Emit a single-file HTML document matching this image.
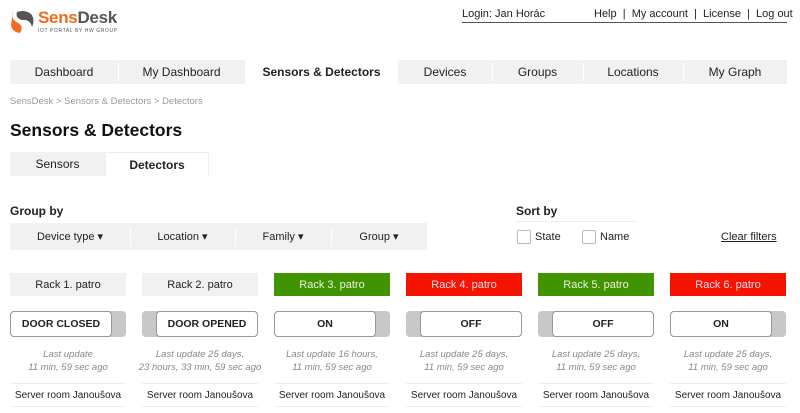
<!DOCTYPE html>
<html><head><meta charset="utf-8"><style>
*{margin:0;padding:0;box-sizing:border-box}
body{width:800px;height:413px;background:#fff;font-family:"Liberation Sans",sans-serif;color:#222;position:relative;overflow:hidden;font-size:12px}
.a{position:absolute}
.c{display:flex;align-items:center;justify-content:center}
.nav div{position:absolute;top:60px;height:24px;background:#f1f1f1;display:flex;align-items:center;justify-content:center;font-size:12px}
.sep{position:absolute;width:1px;background:#fff}
.rack{position:absolute;top:273px;width:116px;height:23px;display:flex;align-items:center;justify-content:center;font-size:11px;background:#f1f1f1}
.g{background:#419400;color:#e8f4dd}.r{background:#f61300;color:#fde}
.tg{position:absolute;top:311px;width:116px;height:26px;background:#c8c8c8;border-radius:4px}
.tg span{position:absolute;top:0;height:26px;width:102px;background:#fff;border:1px solid #999;border-radius:4px;display:flex;align-items:center;justify-content:center;font-weight:bold;font-size:10.5px}
.lu{position:absolute;top:348px;width:140px;text-align:center;font-style:italic;color:#888;font-size:9.5px;line-height:13px;white-space:nowrap}
.sr{position:absolute;top:383px;width:116px;height:24px;border-top:1px solid #eee;border-bottom:1px solid #eee;display:flex;align-items:center;justify-content:center;font-size:10px;white-space:nowrap}
.cb{position:absolute;top:230px;width:14px;height:14px;border:1px solid #bbb;border-radius:2px}
</style></head><body>
<svg class="a" style="left:10px;top:9px" width="26" height="26" viewBox="0 0 26 26"><path d="M3 2 Q0 10 8 14 Q14 17 10 24 Q2 23 1 16Z" fill="#f26a1b"/><path d="M7 3 Q16 0 22 6 Q25 12 22 18 Q20 10 12 11 Q5 9 7 3Z" fill="#555"/></svg>
<div class="a" style="left:38px;top:8px;font-size:17px;font-weight:bold;letter-spacing:-0.3px"><span style="color:#f26a1b">Sens</span><span style="color:#555">Desk</span></div>
<div class="a" style="left:38px;top:28px;font-size:5px;color:#555;letter-spacing:0.6px">IOT PORTAL BY HW GROUP</div>
<div class="a" style="left:462px;top:8px;font-size:11px">Login: Jan Horác</div>
<div class="a" style="left:594px;top:8px;font-size:11px">Help &nbsp;|&nbsp; My account &nbsp;|&nbsp; License &nbsp;|&nbsp; Log out</div>
<div class="a" style="left:462px;top:22px;width:325px;height:1px;background:#555"></div>
<div class="nav">
<div style="left:10px;width:108px">Dashboard</div>
<div style="left:118px;width:127px">My Dashboard</div>
<div style="left:245px;width:153px;background:#fff;font-weight:bold">Sensors &amp; Detectors</div>
<div style="left:398px;width:94px">Devices</div>
<div style="left:492px;width:91px">Groups</div>
<div style="left:583px;width:100px">Locations</div>
<div style="left:683px;width:104px">My Graph</div>
</div>
<div class="sep" style="left:118px;top:63px;height:18px"></div>
<div class="sep" style="left:492px;top:63px;height:18px"></div>
<div class="sep" style="left:583px;top:63px;height:18px"></div>
<div class="sep" style="left:683px;top:63px;height:18px"></div>
<div class="a" style="left:10px;top:96px;font-size:9.5px;color:#999">SensDesk &gt; Sensors &amp; Detectors &gt; Detectors</div>
<div class="a" style="left:10px;top:120px;font-size:17.5px;font-weight:bold;color:#111">Sensors &amp; Detectors</div>
<div class="a c" style="left:10px;top:152px;width:95px;height:24px;background:#f1f1f1">Sensors</div>
<div class="a c" style="left:105px;top:152px;width:104px;height:24px;border:1px solid #eee;border-bottom:none;font-weight:bold">Detectors</div>
<div class="a" style="left:10px;top:204px;font-weight:bold;font-size:12px">Group by</div>
<div class="a" style="left:10px;top:223px;width:417px;height:27px;background:#f1f1f1"></div>
<div class="a c" style="left:10px;top:223px;width:120px;height:27px;font-size:11px">Device type ▾</div>
<div class="a c" style="left:130px;top:223px;width:105px;height:27px;font-size:11px">Location ▾</div>
<div class="a c" style="left:235px;top:223px;width:96px;height:27px;font-size:11px">Family ▾</div>
<div class="a c" style="left:331px;top:223px;width:96px;height:27px;font-size:11px">Group ▾</div>
<div class="sep" style="left:130px;top:228px;height:18px"></div>
<div class="sep" style="left:235px;top:228px;height:18px"></div>
<div class="sep" style="left:331px;top:228px;height:18px"></div>
<div class="a" style="left:516px;top:204px;font-weight:bold;font-size:12px">Sort by</div>
<div class="a" style="left:516px;top:221px;width:122px;height:1px;background:#eee"></div>
<div class="cb" style="left:517px"></div><div class="a" style="left:535px;top:231px;font-size:11px">State</div>
<div class="cb" style="left:582px"></div><div class="a" style="left:600px;top:231px;font-size:11px">Name</div>
<div class="a" style="left:721px;top:231px;font-size:11px;text-decoration:underline">Clear filters</div>

<div class="rack" style="left:10px">Rack 1. patro</div>
<div class="rack" style="left:142px">Rack 2. patro</div>
<div class="rack g" style="left:274px">Rack 3. patro</div>
<div class="rack r" style="left:406px">Rack 4. patro</div>
<div class="rack g" style="left:538px">Rack 5. patro</div>
<div class="rack r" style="left:670px">Rack 6. patro</div>

<div class="tg" style="left:10px"><span style="left:0">DOOR CLOSED</span></div>
<div class="tg" style="left:142px"><span style="left:14px">DOOR OPENED</span></div>
<div class="tg" style="left:274px"><span style="left:0">ON</span></div>
<div class="tg" style="left:406px"><span style="left:14px">OFF</span></div>
<div class="tg" style="left:538px"><span style="left:14px">OFF</span></div>
<div class="tg" style="left:670px"><span style="left:0">ON</span></div>

<div class="lu" style="left:-2px">Last update<br>11 min, 59 sec ago</div>
<div class="lu" style="left:130px">Last update 25 days,<br>23 hours, 33 min, 59 sec ago</div>
<div class="lu" style="left:262px">Last update 16 hours,<br>11 min, 59 sec ago</div>
<div class="lu" style="left:394px">Last update 25 days,<br>11 min, 59 sec ago</div>
<div class="lu" style="left:526px">Last update 25 days,<br>11 min, 59 sec ago</div>
<div class="lu" style="left:658px">Last update 25 days,<br>11 min, 59 sec ago</div>

<div class="sr" style="left:10px">Server room Janoušova</div>
<div class="sr" style="left:142px">Server room Janoušova</div>
<div class="sr" style="left:274px">Server room Janoušova</div>
<div class="sr" style="left:406px">Server room Janoušova</div>
<div class="sr" style="left:538px">Server room Janoušova</div>
<div class="sr" style="left:670px">Server room Janoušova</div>
</body></html>
